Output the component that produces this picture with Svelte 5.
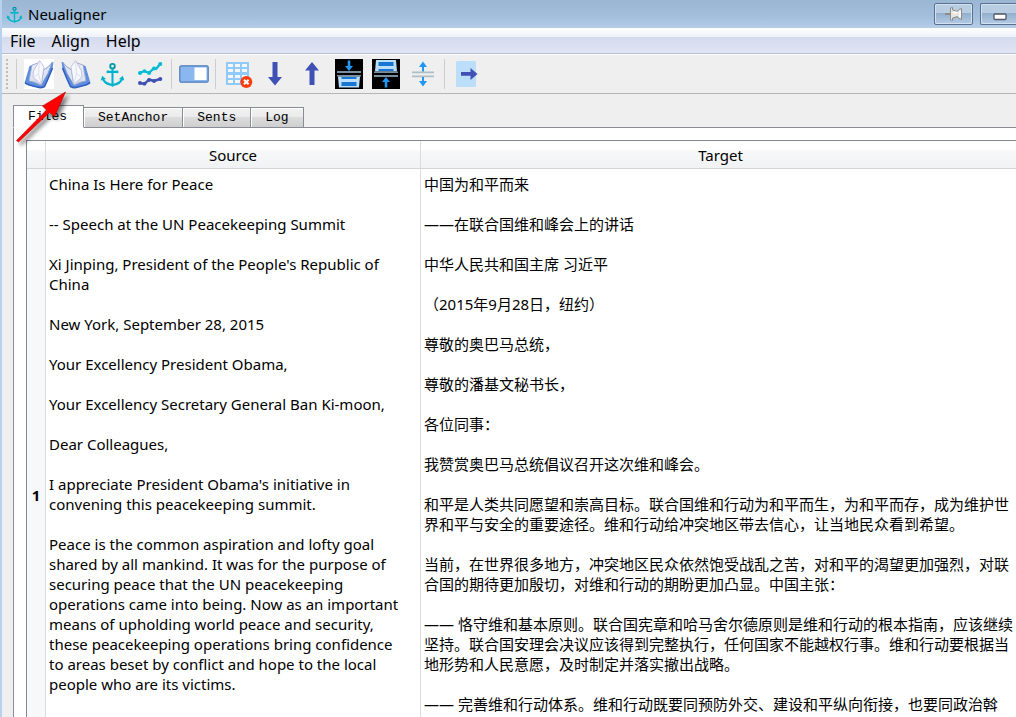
<script>
  let active = $state('Files');
  const menus = ['File', 'Align', 'Help'];
  const tabs = ['Files', 'SetAnchor', 'Sents', 'Log'];
  const groups = [
    ['Open source', 'Open target', 'Set anchor', 'Align'],
    ['Toggle panel'],
    ['Clear table', 'Move down', 'Move up', 'Merge down', 'Merge up', 'Split'],
    ['Export']
  ];
  const source = [
    ['China Is Here for Peace'],
    ['-- Speech at the UN Peacekeeping Summit'],
    ["Xi Jinping, President of the People's Republic of", 'China'],
    ['New York, September 28, 2015'],
    ['Your Excellency President Obama,'],
    ['Your Excellency Secretary General Ban Ki-moon,'],
    ['Dear Colleagues,'],
    ["I appreciate President Obama's initiative in", 'convening this peacekeeping summit.'],
    [
      'Peace is the common aspiration and lofty goal',
      'shared by all mankind. It was for the purpose of',
      'securing peace that the UN peacekeeping',
      'operations came into being. Now as an important',
      'means of upholding world peace and security,',
      'these peacekeeping operations bring confidence',
      'to areas beset by conflict and hope to the local',
      'people who are its victims.'
    ]
  ];
  const target = [
    ['中国为和平而来'],
    ['——在联合国维和峰会上的讲话'],
    ['中华人民共和国主席 习近平'],
    ['（2015年9月28日，纽约）'],
    ['尊敬的奥巴马总统，'],
    ['尊敬的潘基文秘书长，'],
    ['各位同事：'],
    ['我赞赏奥巴马总统倡议召开这次维和峰会。'],
    [
      '和平是人类共同愿望和崇高目标。联合国维和行动为和平而生，为和平而存，成为维护世',
      '界和平与安全的重要途径。维和行动给冲突地区带去信心，让当地民众看到希望。'
    ],
    [
      '当前，在世界很多地方，冲突地区民众依然饱受战乱之苦，对和平的渴望更加强烈，对联',
      '合国的期待更加殷切，对维和行动的期盼更加凸显。中国主张：'
    ],
    [
      '—— 恪守维和基本原则。联合国宪章和哈马舍尔德原则是维和行动的根本指南，应该继续',
      '坚持。联合国安理会决议应该得到完整执行，任何国家不能越权行事。维和行动要根据当',
      '地形势和人民意愿，及时制定并落实撤出战略。'
    ],
    ['—— 完善维和行动体系。维和行动既要同预防外交、建设和平纵向衔接，也要同政治斡']
  ];
</script>

{#snippet anchor(size)}
  <svg width={size} height={size} viewBox="0 0 24 24" fill="none" stroke="#00b3cc" stroke-width="2">
    <circle cx="12" cy="4" r="2.2" stroke="#0097a7" stroke-width="1.8" />
    <path d="M12 6.5V22M7.5 9.5h9" />
    <path d="M2.5 15.5C3.5 19 7.5 21.5 12 22c4.500-.5 8.500-3 9.500-6.500" />
    <path d="M0.800 17.800 2 13.200 5.800 16.200zM23.200 17.800 22 13.200 18.200 16.200z" fill="#00b3cc" stroke="none" />
    <circle cx="7.500" cy="9.500" r="1.300" fill="#00b3cc" stroke="none" />
    <circle cx="16.500" cy="9.500" r="1.300" fill="#00b3cc" stroke="none" />
    <path d="M9 21.300 12 24l3-2.700z" fill="#00b3cc" stroke="none" />
  </svg>
{/snippet}

{#snippet book()}
  <path d="M0.500 24 5.500 7 8 6 5 21 17 26 25.500 7 29.500 2.500 28.500 10 21 27.500Q17 30 14 28.500L3 25.500z" fill="#5f8fdc" />
  <path d="M1 23.800 4.500 25.800 14 28.300Q17 29.300 20.500 27.500L23.500 21 28.500 9" fill="none" stroke="#3060c0" stroke-width="1.600" />
  <path d="M5 22 8 6 14 4 19.500 10 17 26.500Q11 22.500 5 22z" fill="url(#page)" stroke="#8c9bcb" stroke-width=".8" />
  <path d="M17 26.500 19.500 11Q25 8 28.500 3L24 14.500z" fill="url(#page)" stroke="#6f8dcc" stroke-width=".8" />
  <path d="M9.500 12 15.500 1.500 20 8 17.300 25.500 9 18z" fill="#f7f8fd" stroke="#b3b9d6" stroke-width=".8" />
  <path d="M15.500 1.500 14.500 15l2.800 10M9.500 18l5-3" fill="none" stroke="#d4d7e8" stroke-width=".8" />
{/snippet}

{#snippet icon(name)}
  {#if name === 'Open source'}
    <svg width="30" height="30" viewBox="0 0 30 30"><rect width="30" height="30" fill="#fff" />{@render book()}</svg>
  {:else if name === 'Open target'}
    <svg width="30" height="30" viewBox="0 0 30 30"><g transform="matrix(-1 0 0 1 30 0)">{@render book()}</g></svg>
  {:else if name === 'Set anchor'}
    {@render anchor(25)}
  {:else if name === 'Align'}
    <svg width="26" height="26" viewBox="0 0 26 26" fill="none" stroke-linejoin="round">
      <path d="M3 12 7 10 12 12 17 7 19 8 23.500 2.500" stroke="#00bcd4" stroke-width="2.400" />
      <g fill="#00bcd4"><circle cx="3" cy="12" r="2" /><circle cx="7.500" cy="10" r="1.800" /><circle cx="12" cy="12" r="1.900" /><circle cx="17" cy="7.500" r="1.900" /><circle cx="23.300" cy="3" r="2" /></g>
      <path d="M3 22 7.500 23 12 18.500 17 20 23 18" stroke="#3f51b5" stroke-width="2.400" />
      <g fill="#3f51b5"><circle cx="3" cy="22" r="2" /><circle cx="7.500" cy="22.700" r="1.900" /><circle cx="12" cy="19" r="1.900" /><circle cx="17" cy="20" r="1.900" /><circle cx="23.300" cy="18" r="2" /></g>
    </svg>
  {:else if name === 'Toggle panel'}
    <svg width="30" height="18" viewBox="0 0 30 18"><rect x=".8" y=".8" width="28.400" height="16.400" rx="1.500" fill="#8bb7f0" stroke="#4e7ab5" stroke-width="1.200" /><rect x="15.500" y="2.500" width="12" height="12.500" fill="#fff" /></svg>
  {:else if name === 'Clear table'}
    <svg width="30" height="28" viewBox="0 0 30 28">
      <rect x="3" y="2" width="23" height="23" fill="#90caf9" />
      <g fill="#f4f6f8"><rect x="5" y="4" width="5" height="3" /><rect x="12" y="4" width="5" height="3" /><rect x="19" y="4" width="5" height="3" /><rect x="5" y="9" width="5" height="3" /><rect x="12" y="9" width="5" height="3" /><rect x="19" y="9" width="5" height="3" /><rect x="5" y="15" width="5" height="3" /><rect x="12" y="15" width="5" height="3" /><rect x="19" y="15" width="5" height="3" /><rect x="5" y="20" width="5" height="3" /><rect x="12" y="20" width="5" height="3" /></g>
      <circle cx="23.300" cy="22" r="6" fill="#fa3c0c" /><path d="m21 19.700 4.600 4.600m0-4.600L21 24.300" stroke="#fff" stroke-width="2" />
    </svg>
  {:else if name === 'Move down'}
    <svg width="16" height="26" viewBox="0 0 16 26"><path d="M5.500 1h5v15H15l-7 8.500L1 16h4.500z" fill="#3f51b5" /></svg>
  {:else if name === 'Move up'}
    <svg width="16" height="26" viewBox="0 0 16 26"><path d="M5.500 24h5V9.500H15L8 1 1 9.500h4.500z" fill="#3f51b5" /></svg>
  {:else if name === 'Merge down'}
    <svg width="28" height="30" viewBox="0 0 28 30">
      <rect width="28" height="30" fill="#000" /><path d="M12.700 1.500h2.600V7H18l-4 5-4-5h2.700z" fill="#2196f3" />
      <path d="M2 12h24v2H2zM2 16h24v1.500H2z" fill="#78909c" /><path d="M3 17.500h22L24 28.500H4z" fill="#bbdefb" /><path d="M6.500 18h15v2h-15zM6.500 23h15v4h-15z" fill="#1976d2" />
    </svg>
  {:else if name === 'Merge up'}
    <svg width="28" height="30" viewBox="0 0 28 30">
      <rect width="28" height="30" fill="#000" /><path d="M4 1h20l1 11.500H3z" fill="#bbdefb" /><path d="M6.500 3h15v4h-15zM6.500 10h15v2h-15z" fill="#1976d2" />
      <path d="M2 12.500h24V14H2zM2 16h24v2H2z" fill="#78909c" /><path d="M12.700 28.500h2.600V23H18l-4-5-4 5h2.700z" fill="#2196f3" />
    </svg>
  {:else if name === 'Split'}
    <svg width="24" height="26" viewBox="0 0 24 26"><path d="M1 10.500h22v1.800H1zM1 14.500h22v1.800H1z" fill="#b0bec5" /><path d="M11 10.500V6H8l4-5.500L16 6h-3v4.500zM11 16v4H8l4 5.500 4-5.500h-3v-4z" fill="#2196f3" /></svg>
  {:else}
    <svg width="24" height="28" viewBox="0 0 24 28"><rect x="1" y="1" width="20" height="26" rx="1.500" fill="#bbdefb" /><path d="M6 12h9.500V8L22.500 14l-7 6v-4.300H6z" fill="#3f51b5" /></svg>
  {/if}
{/snippet}

{#snippet paragraphs(list)}
  {#each list as lines}
    <p>{lines.join('\n')}</p>
  {/each}
{/snippet}

<svg class="defs" width="0" height="0" aria-hidden="true">
  <defs><linearGradient id="page" x1="0" y1="0" x2="1" y2="1"><stop offset="0" stop-color="#f4f5fb" /><stop offset="1" stop-color="#c2cbe8" /></linearGradient></defs>
</svg>

<div class="window">
  <header class="titlebar">
    {@render anchor(17)}
    <h1>Neualigner</h1>
    <button class="cap" aria-label="Pin">
      <svg width="18" height="16" viewBox="0 0 18 16"><path d="M0 7h5v2H0z" fill="#8f8c88" /><path d="M5.500 2 7.500 1.500V4l5 1.500L14 3.500l2.500-1v11L14 12.500l-1.500-2-5 1.500v2.500L5.500 14z" fill="#e8e6e3" stroke="#8f8c88" /><path d="M8 6.500h4.500M15 5v6" stroke="#fff" stroke-width="1.500" /></svg>
    </button>
    <button class="cap wide" aria-label="Minimize"><svg width="14" height="8" viewBox="0 0 14 8"><rect x="1" y="1" width="12" height="5.500" rx="1" fill="#fff" stroke="#535666" stroke-width="1.300" /></svg></button>
  </header>
  <nav class="menubar">
    {#each menus as m}<button>{m}</button>{/each}
  </nav>
  <div class="toolbar" role="toolbar" aria-label="Tools">
    <span class="grip"></span>
    {#each groups as group}
      <span class="sep"></span>
      {#each group as name}
        <button class="tool" aria-label={name}>{@render icon(name)}</button>
      {/each}
    {/each}
  </div>
  <main>
    <div class="tabs" role="tablist">
      {#each tabs as t}
        <button role="tab" aria-selected={active === t} class:active={active === t} onclick={() => (active = t)}>{t}</button>
      {/each}
    </div>
    <section class="pane">
      <table>
        <colgroup><col class="num" /><col class="src" /><col /></colgroup>
        <thead><tr><th></th><th>Source</th><th>Target</th></tr></thead>
        <tbody>
          <tr>
            <th scope="row">1</th>
            <td>{@render paragraphs(source)}</td>
            <td lang="zh-CN">{@render paragraphs(target)}</td>
          </tr>
        </tbody>
      </table>
    </section>
  </main>
  <svg class="pointer" width="64" height="64" viewBox="0 0 64 64" aria-hidden="true">
    <path d="M6.500 55.500 36.500 25 32.500 21 55.500 7 44.500 31.500 39.500 27.500 8.500 57z" fill="#f00" stroke="#c00000" stroke-width=".6" />
  </svg>
</div>

<style>
  :global(body) {
    margin: 0;
    overflow: hidden;
    background: #efefef;
  }
  .defs {
    position: absolute;
  }
  .window {
    position: relative;
    height: 100vh;
    overflow: hidden;
    box-sizing: border-box;
    border-left: 2px solid #b7d1ee;
    background: #efefef;
    color: #000;
    font: 15px/20px "Noto Sans", "Noto Sans CJK SC", sans-serif;
  }
  button {
    margin: 0;
    padding: 0;
    border: 0;
    background: none;
    color: inherit;
    font: inherit;
  }
  svg {
    display: block;
    flex: none;
  }
  .titlebar {
    display: flex;
    align-items: center;
    gap: 5px;
    height: 28px;
    margin-left: -2px;
    padding-left: 6px;
    background: linear-gradient(#9ab6d3, #a3bfdc 60%, #b4cde8);
  }
  h1 {
    flex: 1;
    margin: 0;
    font: inherit;
  }
  .cap {
    display: flex;
    align-items: center;
    justify-content: center;
    box-sizing: border-box;
    width: 39px;
    height: 22px;
    margin-right: 2px;
    border: 1px solid #58718e;
    border-radius: 2px;
    box-shadow: inset 0 0 0 1px #d3e1f0;
    background: linear-gradient(#b9cde2 45%, #92aecb 45%, #b3cce6);
  }
  .cap.wide {
    padding-top: 6px;
    margin-right: -3px;
    border-right: 0;
    border-radius: 2px 0 0 2px;
  }
  .menubar {
    display: flex;
    gap: 16px;
    box-sizing: border-box;
    height: 26px;
    padding: 0 8px;
    border-bottom: 1px solid #b6bccc;
    background: linear-gradient(#fff, #eef1f8 34%, #d5dbee 38%, #e0e5f5);
    font-size: 16px;
  }
  .toolbar {
    display: flex;
    align-items: center;
    box-sizing: border-box;
    height: 40px;
    border-top: 1px solid #fff;
    border-bottom: 1px solid #b5b5b5;
  }
  .grip {
    width: 2px;
    height: 31px;
    margin: 0 5px 0 4px;
    background: repeating-linear-gradient(#bdbdbd 0 2px, transparent 2px 4px);
  }
  .sep {
    width: 1px;
    height: 30px;
    margin: 0 3px;
    background: #cdcdcd;
  }
  .tool {
    display: flex;
    align-items: center;
    justify-content: center;
    width: 37px;
    height: 36px;
  }
  main {
    padding: 11px 0 0 11px;
  }
  .tabs {
    display: flex;
    align-items: flex-end;
    height: 23px;
  }
  .tabs button {
    box-sizing: border-box;
    height: 21px;
    padding: 1px 14px 0;
    border: 1px solid #898c95;
    border-left-width: 0;
    background: linear-gradient(#f2f2f2, #ebebeb 45%, #dcdcdc 50%, #cfcfcf);
    box-shadow: inset 1px 1px #fff;
    font: 13px/18px "Liberation Mono", monospace;
  }
  .tabs button.active {
    position: relative;
    height: 23px;
    padding: 0 16px 0 14px;
    border-left-width: 1px;
    border-bottom-color: #fff;
    background: #fff;
  }
  .pane {
    margin-top: -1px;
    padding: 12px 0 0 12px;
    border: 1px solid #898c95;
    border-right: 0;
    background: #fff;
  }
  table {
    width: calc(100% + 6px);
    table-layout: fixed;
    border-collapse: separate;
    border-spacing: 0;
    border: 1px solid #828790;
  }
  .num {
    width: 19px;
  }
  .src {
    width: 375px;
  }
  th,
  td {
    box-sizing: border-box;
    border-right: 1px solid #dcdcdc;
  }
  thead th {
    height: 28px;
    padding: 0;
    border-bottom: 1px solid #d5d5d5;
    background: linear-gradient(#fff 32%, #f7f8fa 36%, #f1f2f4);
    font-weight: normal;
  }
  tbody th {
    height: 652px;
    padding: 0;
    background: #f7f8fa;
    font-size: 15px;
    vertical-align: middle;
  }
  td {
    padding: 5px 3px;
    vertical-align: top;
    white-space: pre;
  }
  p {
    margin: 0 0 20px;
  }
  .pointer {
    position: absolute;
    left: 8px;
    top: 85px;
    filter: drop-shadow(3px 3px 2px #0008);
    pointer-events: none;
  }
</style>
